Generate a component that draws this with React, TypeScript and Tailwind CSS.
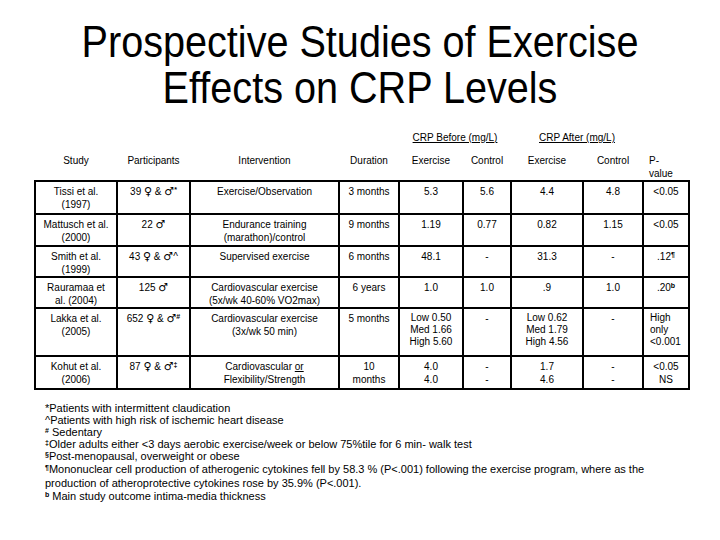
function Sup({ children }: { children: React.ReactNode }) {
  return <sup className="text-[7px] font-bold">{children}</sup>;
}

// gender glyphs render a bit larger than the body text
function G({ s }: { s: string }) {
  return <span className="text-[11px] leading-[10px] [font-family:'DejaVu_Sans',sans-serif]">{s}</span>;
}

const td = "border-2 border-black align-top text-center px-1 pt-[3px]";
const th = "font-normal align-top pt-[7px]";

export default function App() {
  return (
    <div className="w-[720px] h-[540px] bg-white text-black [font-family:'Liberation_Sans',Arial,sans-serif] overflow-hidden">
      {/* Title */}
      <h1 className="pt-[19px] text-center text-[44px] leading-[46px] scale-x-[0.9]">
        <span className="block">Prospective Studies of Exercise</span>
        <span className="block">Effects on CRP Levels</span>
      </h1>

      {/* Table */}
      <table className="mt-[20px] ml-[34px] border-collapse table-fixed text-[10px] leading-[13px]">
        <colgroup>
          <col className="w-[82px]" />
          <col className="w-[73px]" />
          <col className="w-[149px]" />
          <col className="w-[60px]" />
          <col className="w-[64px]" />
          <col className="w-[48px]" />
          <col className="w-[72px]" />
          <col className="w-[60px]" />
          <col className="w-[46px]" />
        </colgroup>
        <thead>
          <tr className="h-[16px]">
            <th colSpan={4}></th>
            <th colSpan={2} className="font-normal text-center align-top">
              <span className="underline">CRP Before (mg/L)</span>
            </th>
            <th colSpan={2} className="font-normal text-center align-top">
              <span className="underline">CRP After (mg/L)</span>
            </th>
            <th></th>
          </tr>
          <tr className="h-[33px]">
            <th className={th}>Study</th>
            <th className={th}>Participants</th>
            <th className={th}>Intervention</th>
            <th className={th}>Duration</th>
            <th className={th}>Exercise</th>
            <th className={th}>Control</th>
            <th className={th}>Exercise</th>
            <th className={th}>Control</th>
            <th className={`${th} text-left pl-[6px]`}>
              P-
              <br />
              value
            </th>
          </tr>
        </thead>
        <tbody>
          <tr className="h-[33px]">
            <td className={td}>Tissi et al.<br />(1997)</td>
            <td className={td}>39 <G s="♀" /> &amp; <G s="♂" /><Sup>*</Sup></td>
            <td className={td}>Exercise/Observation</td>
            <td className={td}>3 months</td>
            <td className={td}>5.3</td>
            <td className={td}>5.6</td>
            <td className={td}>4.4</td>
            <td className={td}>4.8</td>
            <td className={td}>&lt;0.05</td>
          </tr>
          <tr className="h-[32px]">
            <td className={td}>Mattusch et al.<br />(2000)</td>
            <td className={td}>22 <G s="♂" /></td>
            <td className={td}>Endurance training<br />(marathon)/control</td>
            <td className={td}>9 months</td>
            <td className={td}>1.19</td>
            <td className={td}>0.77</td>
            <td className={td}>0.82</td>
            <td className={td}>1.15</td>
            <td className={td}>&lt;0.05</td>
          </tr>
          <tr className="h-[29px]">
            <td className={td}>Smith et al.<br />(1999)</td>
            <td className={td}>43 <G s="♀" /> &amp; <G s="♂" />^</td>
            <td className={td}>Supervised exercise</td>
            <td className={td}>6 months</td>
            <td className={td}>48.1</td>
            <td className={td}>-</td>
            <td className={td}>31.3</td>
            <td className={td}>-</td>
            <td className={td}>.12<Sup>¶</Sup></td>
          </tr>
          <tr className="h-[31px]">
            <td className={td}>Rauramaa et<br />al. (2004)</td>
            <td className={td}>125 <G s="♂" /></td>
            <td className={td}>Cardiovascular exercise<br />(5x/wk 40-60% VO2max)</td>
            <td className={td}>6 years</td>
            <td className={td}>1.0</td>
            <td className={td}>1.0</td>
            <td className={td}>.9</td>
            <td className={td}>1.0</td>
            <td className={td}>.20<Sup>b</Sup></td>
          </tr>
          <tr className="h-[48px]">
            <td className={td}>Lakka et al.<br />(2005)</td>
            <td className={td}>652 <G s="♀" /> &amp; <G s="♂" /><Sup>#</Sup></td>
            <td className={td}>Cardiovascular exercise<br />(3x/wk 50 min)</td>
            <td className={td}>5 months</td>
            <td className={`${td} leading-[12px]`}>Low 0.50<br />Med 1.66<br />High 5.60</td>
            <td className={td}>-</td>
            <td className={`${td} leading-[12px]`}>Low 0.62<br />Med 1.79<br />High 4.56</td>
            <td className={td}>-</td>
            <td className={`${td} !text-left pl-[6px] leading-[12px]`}>High<br />only<br />&lt;0.001</td>
          </tr>
          <tr className="h-[33px]">
            <td className={td}>Kohut et al.<br />(2006)</td>
            <td className={td}>87 <G s="♀" /> &amp; <G s="♂" /><Sup>‡</Sup></td>
            <td className={td}>Cardiovascular <span className="underline">or</span><br />Flexibility/Strength</td>
            <td className={td}>10<br />months</td>
            <td className={td}>4.0<br />4.0</td>
            <td className={td}>-<br />-</td>
            <td className={td}>1.7<br />4.6</td>
            <td className={td}>-<br />-</td>
            <td className={td}>&lt;0.05<br />NS</td>
          </tr>
        </tbody>
      </table>

      {/* Footnotes */}
      <div className="mt-[12px] ml-[45px] w-[610px] text-[11px] leading-[12px]">
        <p>*Patients with intermittent claudication</p>
        <p>^Patients with high risk of ischemic heart disease</p>
        <p><Sup>#</Sup> Sedentary</p>
        <p><Sup>‡</Sup>Older adults either &lt;3 days aerobic exercise/week or below 75%tile for 6 min- walk test</p>
        <p><Sup>§</Sup>Post-menopausal, overweight or obese</p>
        <p className="leading-[14px]">
          <Sup>¶</Sup>Mononuclear cell production of atherogenic cytokines fell by 58.3 % (P&lt;.001) following the exercise program, where as the
          production of atheroprotective cytokines rose by 35.9% (P&lt;.001).
        </p>
        <p><Sup>b</Sup> Main study outcome intima-media thickness</p>
      </div>
    </div>
  );
}
